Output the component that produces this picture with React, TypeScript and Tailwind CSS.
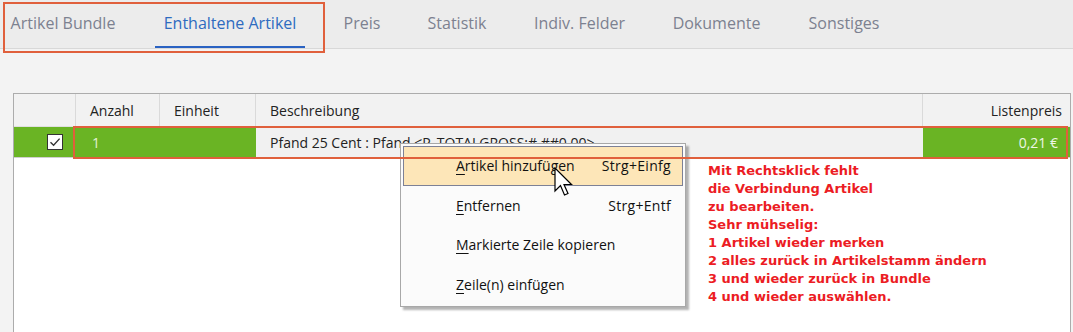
import React from "react";

const tabs = [
  { label: "Artikel Bundle", w: 122 },
  { label: "Enthaltene Artikel", w: 150, active: true },
  { label: "Preis", w: 52 },
  { label: "Statistik", w: 76 },
  { label: "Indiv. Felder", w: 107 },
  { label: "Dokumente", w: 105 },
  { label: "Sonstiges", w: 88 },
];

const font = { fontFamily: '"Open Sans", "Noto Sans", sans-serif' };

function U({ c, rest }: { c: string; rest: string }) {
  return (
    <span>
      <span className="underline underline-offset-[3px]">{c}</span>
      {rest}
    </span>
  );
}

export default function App() {
  return (
    <div
      className="relative w-[1073px] h-[332px] overflow-hidden bg-[#f3f3f3] flex flex-col"
      style={font}
    >
      {/* Tab bar */}
      <div className="h-[49px] shrink-0 bg-[#ececec] border-b border-[#d8d8d8] flex pl-[2px] gap-[31px]">
        {tabs.map((t) => (
          <div
            key={t.label}
            className={
              "h-full flex items-center justify-center text-[16px] font-medium whitespace-nowrap " +
              (t.active
                ? "text-[#2e6bc0] border-b-2 border-[#2a62c2] pb-[1px]"
                : "text-[#7c8190] pb-[3px]")
            }
            style={{ width: t.w }}
          >
            {t.label}
          </div>
        ))}
      </div>

      {/* Table */}
      <div className="mt-[44px] ml-[13px] w-[1058px] flex-1 border border-[#acacac] border-b-0 bg-white flex flex-col text-[14px] text-[#222]">
        {/* header */}
        <div className="h-[33px] flex bg-[#f2f2f2] border-b border-[#e0e0e0]">
          <div className="w-[62px] border-r border-[#dadada]" />
          <div className="w-[84px] border-r border-[#dadada] flex items-center pl-[14px]">Anzahl</div>
          <div className="w-[96px] border-r border-[#dadada] flex items-center pl-[14px]">Einheit</div>
          <div className="w-[667px] border-r border-[#dadada] flex items-center pl-[14px]">Beschreibung</div>
          <div className="flex-1 flex items-center justify-end pr-[8px]">Listenpreis</div>
        </div>
        {/* row */}
        <div className="h-[31px] flex border-b border-[#cfcfcf]">
          <div className="w-[62px] bg-[#6ab424] flex items-center justify-end pr-[13px]">
            <div className="w-[16px] h-[16px] bg-white border border-[#333] flex items-center justify-center">
              <svg width="12" height="12" viewBox="0 0 12 12">
                <path d="M1.5 6.2 L4.6 9.2 L10.6 2.6" fill="none" stroke="#333" strokeWidth="1.4" />
              </svg>
            </div>
          </div>
          <div className="w-[180px] bg-[#6ab424] flex items-center pl-[16px] text-[#e2f0d4]">1</div>
          <div className="w-[667px] bg-[#f1f1f1] flex items-center pl-[14px] whitespace-nowrap">
            Pfand 25 Cent : Pfand &lt;P_TOTALGROSS:# ##0.00&gt;
          </div>
          <div className="flex-1 bg-[#6ab424] flex items-center justify-end pr-[12px] text-[#eef6e6]">
            0,21 €
          </div>
        </div>
        <div className="flex-1 bg-white" />
      </div>

      {/* Context menu */}
      <div className="absolute left-[400px] top-[143px] w-[286px] h-[164px] bg-[#fbfbfb] border border-[#a8a8a8] shadow-[3px_3px_2px_rgba(0,0,0,0.3)] p-[2px] flex flex-col text-[14px] text-[#111]">
        <div className="h-[40px] flex items-center justify-between pl-[52px] pr-[11px] bg-[#fde6b8] border border-[#7d8196]">
          <U c="A" rest="rtikel hinzufügen" />
          <span className="tracking-[0.3px]">Strg+Einfg</span>
        </div>
        <div className="h-[40px] flex items-center justify-between pl-[53px] pr-[12px]">
          <U c="E" rest="ntfernen" />
          <span className="tracking-[0.3px]">Strg+Entf</span>
        </div>
        <div className="h-[40px] flex items-center pl-[53px]">
          <U c="M" rest="arkierte Zeile kopieren" />
        </div>
        <div className="h-[40px] flex items-center pl-[53px]">
          <U c="Z" rest="eile(n) einfügen" />
        </div>
      </div>

      {/* Cursor */}
      <svg className="absolute left-[554px] top-[167px]" width="22" height="32" viewBox="0 0 22 32">
        <path
          d="M1 1 L1 24 L6.5 18.5 L10.5 28 L14 26.5 L10 17.5 L17.5 17.5 Z"
          fill="white"
          stroke="black"
          strokeWidth="1.2"
          strokeLinejoin="miter"
        />
      </svg>

      {/* Annotations */}
      <div className="absolute left-[3px] top-[2px] w-[322px] h-[51px] border-2 border-[#e0603c]" />
      <div className="absolute left-[73px] top-[126px] w-[995px] h-[33px] border-2 border-[#e0603c]" />

      <div
        className="absolute left-[708px] top-[162px] text-[13px] font-bold leading-[18px] text-[#ec1c24] whitespace-nowrap"
        style={{ fontFamily: '"DejaVu Sans", Verdana, sans-serif' }}
      >
        <div>Mit Rechtsklick fehlt</div>
        <div>die Verbindung Artikel</div>
        <div>zu bearbeiten.</div>
        <div>Sehr mühselig:</div>
        <div>1 Artikel wieder merken</div>
        <div>2 alles zurück in Artikelstamm ändern</div>
        <div>3 und wieder zurück in Bundle</div>
        <div>4 und wieder auswählen.</div>
      </div>
    </div>
  );
}
